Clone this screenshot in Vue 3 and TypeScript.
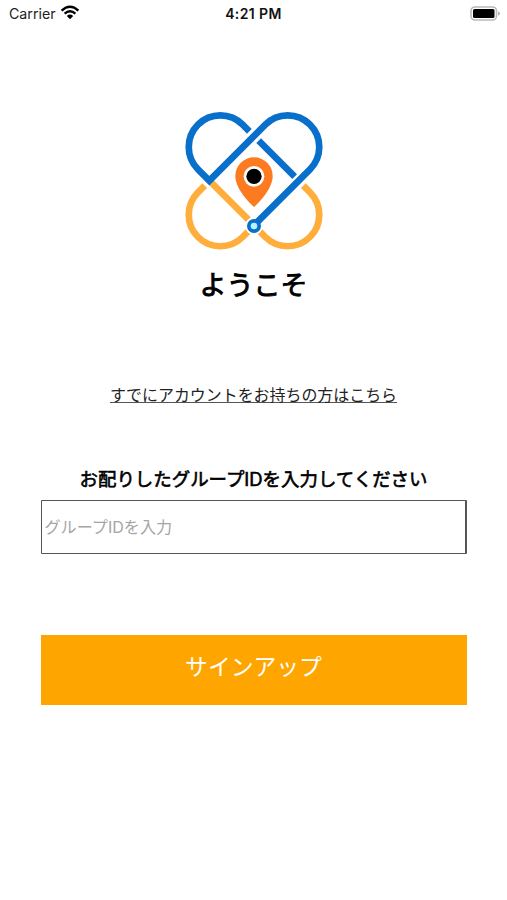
<script setup lang="ts">
import { ref } from 'vue'

const groupId = ref('')
</script>

<template>
  <main class="screen">
    <header class="status">
      <div class="carrier">
        <span>Carrier</span>
        <svg class="wifi" viewBox="0 0 20 15" aria-hidden="true">
          <path d="M1.6 5.6 Q10 -2.1 18.4 5.6" />
          <path d="M4.6 8.7 Q10 3.9 15.4 8.7" />
          <path class="solid" d="M6.8 10.9 Q10 8.1 13.2 10.9 L10 14.2 Z" />
        </svg>
      </div>
      <span class="time">4:21 PM</span>
      <svg class="battery" viewBox="0 0 32 16" aria-hidden="true">
        <rect x="2" y="1" width="25.5" height="13" rx="4" fill="#fff" stroke="#b9b9b9" stroke-width="1.6" />
        <rect x="4" y="3" width="21.5" height="9" rx="1.5" fill="#000" />
        <path d="M29 5.2 Q31 6 31 7.5 T29 9.8 Z" fill="#b0b0b0" />
      </svg>
    </header>

    <svg class="logo" viewBox="0 0 480 480" aria-hidden="true">
      <g fill="none" stroke-width="20">
        <g stroke="#ffad3b">
          <path d="M92 257 L72 277 A94 94 0 0 0 206 411 L222 395" />
          <path d="M388 257 L408 277 A94 94 0 0 1 274 411 L258 395" />
          <path d="M112 248 L223 359" />
        </g>
        <circle cx="240" cy="378" r="26" fill="#fff" />
        <g stroke="#0870ca">
          <path d="M226 94 L206 74 A94 94 0 0 0 72 208 L106 242 L274 74 A94 94 0 0 1 408 208 L246 370" />
          <path d="M254 122 L362 230" />
        </g>
      </g>
      <circle cx="240" cy="378" r="15.5" fill="#b9efff" stroke="#0870ca" stroke-width="11" />
      <path d="M240 321 C218 301 184 263 184 228 A56 56 0 0 1 296 228 C296 263 262 301 240 321 Z" fill="#fc7a20" />
      <circle cx="240" cy="229" r="31" fill="#fff" />
      <circle cx="240" cy="229" r="23" fill="#000" />
    </svg>

    <h1>ようこそ</h1>
    <a class="login">すでにアカウントをお持ちの方はこちら</a>

    <form class="form" @submit.prevent>
      <label for="group">お配りしたグループIDを入力してください</label>
      <input id="group" v-model="groupId" type="text" placeholder="グループIDを入力" />
      <button type="submit">サインアップ</button>
    </form>
  </main>
</template>

<style>
body {
  background: #fff;
}
</style>

<style scoped>
.screen {
  box-sizing: border-box;
  height: 900px;
  display: flex;
  flex-direction: column;
  align-items: center;
  color: #000;
  font-family: Inter, "Noto Sans CJK JP", sans-serif;
  overflow: hidden;
}
.status {
  box-sizing: border-box;
  width: 100%;
  height: 27px;
  padding: 0 6px 0 9px;
  display: grid;
  grid-template-columns: 1fr auto 1fr;
  align-items: center;
  font-size: 14.2px;
  line-height: 27px;
  color: #222;
}
.carrier {
  display: flex;
  align-items: center;
  gap: 4px;
}
.wifi {
  width: 20px;
  height: 15px;
  margin-top: -2px;
  fill: none;
  stroke: #000;
  stroke-width: 2.4;
}
.wifi .solid {
  fill: #000;
  stroke: none;
}
.time {
  margin-left: -3px;
  font-weight: 600;
  font-size: 14px;
  letter-spacing: 0.4px;
  color: #111;
}
.battery {
  width: 32px;
  height: 16px;
  justify-self: end;
}
.logo {
  width: 160px;
  height: 160px;
  margin-top: 73px;
}
h1 {
  margin: 6px 0 0;
  height: 40px;
  line-height: 40px;
  font-size: 27px;
  font-weight: 400;
  -webkit-text-stroke: 0.9px #000;
}
.login {
  margin-top: 78px;
  height: 24px;
  line-height: 24px;
  font-size: 15.95px;
  color: #222;
  text-decoration: underline;
  text-decoration-color: #555;
  text-decoration-thickness: 1px;
  text-underline-offset: 1px;
}
.form {
  width: 426px;
  margin-top: 56px;
  display: flex;
  flex-direction: column;
}
label {
  height: 36px;
  line-height: 31px;
  text-align: center;
  white-space: nowrap;
  font-size: 18.45px;
  font-weight: 400;
  -webkit-text-stroke: 0.6px #000;
}
input {
  box-sizing: border-box;
  height: 54px;
  padding: 0 3px;
  border: 1px solid #555;
  border-right-width: 2px;
  border-radius: 1px;
  background: #fff;
  font: 16.1px Inter, "Noto Sans CJK JP", sans-serif;
  outline: none;
}
input::placeholder {
  color: #a5a5a5;
  opacity: 1;
}
button {
  height: 70px;
  margin-top: 81px;
  padding: 0 0 10px;
  border: 0;
  background: #ffa500;
  color: #fff;
  font: 22.8px Inter, "Noto Sans CJK JP", sans-serif;
}
</style>
